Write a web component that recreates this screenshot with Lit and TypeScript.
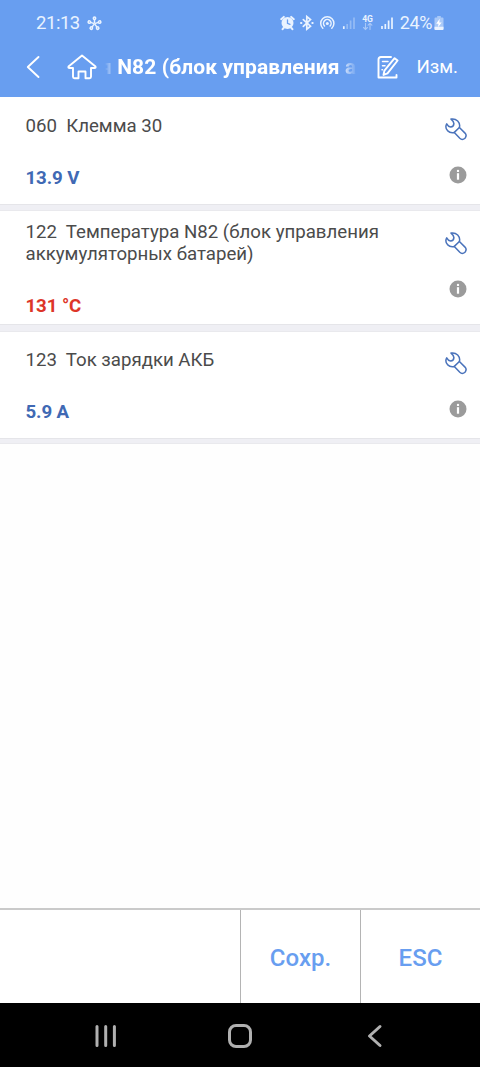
import { LitElement, html, css, svg } from "lit";
import { customElement, property } from "lit/decorators.js";
import { classMap } from "lit/directives/class-map.js";

interface Reading {
  code: string;
  name: string;
  value: string;
  alert: boolean;
  kind: "first" | "tall" | "last";
}

const READINGS: Reading[] = [
  { code: "060", name: "Клемма 30", value: "13.9 V", alert: false, kind: "first" },
  { code: "122", name: "Температура N82 (блок управления аккумуляторных батарей)", value: "131 °C", alert: true, kind: "tall" },
  { code: "123", name: "Ток зарядки АКБ", value: "5.9 A", alert: false, kind: "last" },
];

@customElement("status-bar")
class StatusBar extends LitElement {
  static styles = css`
    :host { display: flex; height: 46px; box-sizing: border-box; padding: 0 36px 0 36px; align-items: center; justify-content: space-between; color: #eaf3ff; font-size: 18.5px; }
    .side { display: flex; align-items: center; }
    .time { letter-spacing: -0.45px; margin-right: 7px; }
    .pct { font-size: 18px; letter-spacing: -0.4px; margin-left: 5px; line-height: 20px; margin-top: -1px; }
    svg { display: block; flex: none; }
    .pinwheel { width: 15px; height: 15px; }
    .sys { width: 115px; height: 20px; }
    .battery { width: 10px; height: 16px; margin-left: 2px; }
    .net { font: 700 8.6px Roboto, sans-serif; }
  `;
  render() {
    return html`
      <div class="side">
        <span class="time">21:13</span>
        <svg class="pinwheel" viewBox="0 0 15 15" fill="none" stroke="currentColor" stroke-width="1.5">
          ${[0, 72, 144, 216, 288].map(
            (a) => svg`<g transform="rotate(${a} 7.5 7.7)"><path d="M7.5 7.5V3.5"/><circle cx="7.5" cy="2.3" r="1.2"/></g>`
          )}
        </svg>
      </div>
      <div class="side">
        <svg class="sys" viewBox="0 0 115 20" fill="none" stroke="currentColor" stroke-width="1.4" stroke-linecap="round">
          <circle cx="7.5" cy="10" r="6" fill="currentColor" stroke="none"/>
          <path d="M1.2 6.2L3.8 3.9M13.8 6.2L11.2 3.9M3.6 15L2.6 16.2M11.4 15l1 1.2" stroke-width="2"/>
          <path d="M7.5 6.8v3.5l2.5 1" stroke="#689ef0" stroke-width="1.3"/>
          <path d="M23.3 6.6l7.2 6.6-3.7 3V3.6l3.7 3-7.2 6.8" stroke-width="1.7"/>
          <path d="M21 10h.4M32.3 10h.4" stroke-width="2"/>
          <g stroke-width="1.5">
            <path d="M42.8 15.2a6.6 6.6 0 1 1 9 0"/>
            <path d="M44.5 12.9a3.8 3.8 0 1 1 5.6 0"/>
          </g>
          <circle cx="47.3" cy="10.5" r="1.5" fill="currentColor" stroke="none"/>
          <g stroke-width="1.7" stroke-linecap="butt">
            <path d="M63.8 16v-2.8"/>
            <path d="M67.2 16v-5M70.6 16V7.6M74 16V4.4" opacity=".35"/>
            <path d="M102 16v-3M105.3 16v-5M108.6 16V7.6M112 16V4.4"/>
          </g>
          <text class="net" x="82.2" y="8.8" fill="currentColor" stroke="none">4G</text>
          <g opacity=".5" stroke-width="1.1">
            <path d="M85.5 10.3v6M83.6 14.5l1.9 1.9 1.9-1.9"/>
            <path d="M90 16.4v-6M88.1 12.2l1.9-1.9 1.9 1.9"/>
          </g>
        </svg>
        <span class="pct">24%</span>
        <svg class="battery" viewBox="0 0 10 16">
          <path d="M3.2 1h3.6v1.5H8.5Q9.5 2.5 9.5 3.5V14Q9.5 15 8.5 15H1.5Q.5 15 .5 14V3.5Q.5 2.5 1.5 2.5H3.2z" fill="currentColor" opacity=".5"/>
          <path d="M.5 11.8h9V14q0 1-1 1h-7q-1 0-1-1z" fill="currentColor"/>
          <path d="M5.7 3.8L2.2 8.8h2.3l-.5 3.4 3.7-4.8H5.3z" fill="#fff"/>
        </svg>
      </div>
    `;
  }
}

@customElement("title-bar")
class TitleBar extends LitElement {
  static styles = css`
    :host { display: flex; height: 51px; box-sizing: border-box; align-items: center; padding: 0 22px 9px 26px; color: #fff; }
    svg { display: block; flex: none; fill: none; stroke: currentColor; stroke-width: 1.9; stroke-linecap: round; stroke-linejoin: round; }
    .back { width: 14px; height: 24px; }
    .home { width: 30px; height: 26px; margin-left: 27px; }
    .title { flex: none; width: 252px; margin-left: 8px; overflow: hidden; white-space: nowrap; font-weight: 700; font-size: 21px;
      text-indent: -5px; line-height: 26px; letter-spacing: 0.1px;
      -webkit-mask-image: linear-gradient(to right, transparent, #000 14px, #000 calc(100% - 18px), transparent);
      mask-image: linear-gradient(to right, transparent, #000 14px, #000 calc(100% - 18px), transparent); }
    .edit { width: 22px; height: 24px; margin-left: 20px; }
    .action { margin-left: auto; font-size: 18.7px; white-space: nowrap; }
  `;
  render() {
    return html`
      <svg class="back" viewBox="0 0 14 24"><path d="M12.5 2L1.8 12l10.7 10"/></svg>
      <svg class="home" viewBox="0 0 30 26">
        <path d="M15 1.5L1.5 12.5Q1 14 2.5 14H6v8.8Q6 24.3 7.5 24.3h4v-6.8h7v6.8h4q1.5 0 1.5-1.5V14h3.5Q29 14 28.5 12.5z"/>
      </svg>
      <div class="title">я N82 (блок управления а</div>
      <svg class="edit" viewBox="0 0 22 24">
        <path d="M14 2H4Q1.5 2 1.5 4.5V22.5H19.5V20"/>
        <path d="M17.6 3.2l3 2.3L10.5 18.3l-4 1.6.9-4.2z"/>
        <path d="M5.5 6.5h5.5M5.5 10.7h2.5M5 14.7h.5" stroke-width="1.5"/>
      </svg>
      <span class="action">Изм.</span>
    `;
  }
}

@customElement("reading-row")
class ReadingRow extends LitElement {
  @property({ attribute: false }) reading!: Reading;
  static styles = css`
    :host { display: block; }
    .row { display: flex; box-sizing: border-box; background: #fff; justify-content: space-between; padding: 0 13px 0 25.5px; }
    .row.first { height: 107px; --top: 18px; --icons: 20px; }
    .row.tall { height: 113px; --top: 10px; --icons: 19.5px; }
    .row.last { height: 106px; --top: 17px; --icons: 19px; }
    .text { padding-top: var(--top); width: 370px; }
    .name { font-size: 18.65px; line-height: 22px; color: #4b4b4b; white-space: pre-wrap; }
    .value { margin-top: 30px; font-size: 18.7px; line-height: 22px; font-weight: 700; color: #4069b4; letter-spacing: -0.1px; }
    .value.alert { color: #dd3528; }
    .icons { display: flex; flex-direction: column; align-items: flex-end; padding-top: var(--icons); gap: 25px; }
    svg { display: block; }
    .wrench { width: 24px; height: 24px; }
    .info { width: 18px; height: 18px; }
    .gap { height: 7px; background: #efeff4; border-top: 1px solid #e5e5e9; border-bottom: 1px solid #e9e9ed; box-sizing: border-box; }
    .gap.tall { height: 8px; }
    .gap.last { height: 6px; }
  `;
  render() {
    const r = this.reading;
    return html`
      <div class=${classMap({ row: true, [r.kind]: true })}>
        <div class="text">
          <div class="name">${r.code + "  " + r.name}</div>
          <div class=${classMap({ value: true, alert: r.alert })}>${r.value}</div>
        </div>
        <div class="icons">
          <svg class="wrench" viewBox="0 0 24 24" fill="none" stroke="#4a73bb" stroke-width="1.5" stroke-linejoin="round" stroke-linecap="round">
            <path d="M8 2.1Q10.8 4.3 10.9 6.6Q10.7 9.7 7.6 10Q5.200 9.600 3.700 6.800Q1.700 10.500 4.500 13.600Q7.400 16.400 11.300 15.400L16.800 21.300Q19.200 23.600 22 21.200Q24.200 18.500 22 16.100L16.400 10.500Q17.400 6.800 14.700 4Q11.800 1.300 8 2.100z"/>
            <path d="M11.3 15.4l5.1-4.9"/>
          </svg>
          <svg class="info" viewBox="0 0 18 18">
            <circle cx="9" cy="9" r="8.5" fill="#9b9b9b"/>
            <rect x="7.9" y="7.2" width="2.2" height="6.5" fill="#fff"/>
            <circle cx="9" cy="4.9" r="1.2" fill="#fff"/>
          </svg>
        </div>
      </div>
      <div class=${classMap({ gap: true, [r.kind]: true })}></div>
    `;
  }
}

@customElement("app-root")
class AppRoot extends LitElement {
  static styles = css`
    :host { display: flex; flex-direction: column; width: 480px; height: 1067px; background: #fefefe; font-family: Roboto, sans-serif; overflow: hidden; }
    header { height: 97px; background: #689ef0; flex: none; }
    main { flex: 1; }
    .actions { display: grid; grid-template-columns: 240px 120px 120px; height: 95px; flex: none; box-sizing: border-box; border-top: 2px solid #cacaca; background: #fff; }
    .btn { display: flex; align-items: center; justify-content: center; padding-top: 2px; border-left: 1px solid #b4b4b4; color: #689ef0; font-size: 24px; font-weight: 500; }
    nav { display: flex; align-items: center; justify-content: space-between; height: 64px; flex: none; box-sizing: border-box; padding: 1px 94px 0 93px; background: #000; }
    nav svg { display: block; width: 26px; height: 26px; fill: none; stroke: #b0b0b0; stroke-width: 3; stroke-linecap: round; stroke-linejoin: round; }
  `;
  render() {
    return html`
      <header><status-bar></status-bar><title-bar></title-bar></header>
      <main>${READINGS.map((r) => html`<reading-row .reading=${r}></reading-row>`)}</main>
      <div class="actions">
        <div></div>
        <div class="btn">Сохр.</div>
        <div class="btn">ESC</div>
      </div>
      <nav>
        <svg viewBox="0 0 26 26"><path d="M4 3.5v19M12.7 3.5v19M21.4 3.5v19"/></svg>
        <svg viewBox="0 0 26 26"><rect x="2.5" y="2.5" width="21" height="21" rx="6.5"/></svg>
        <svg viewBox="0 0 26 26"><path d="M20 3.5L9.5 13 20 22.5"/></svg>
      </nav>
    `;
  }
}
